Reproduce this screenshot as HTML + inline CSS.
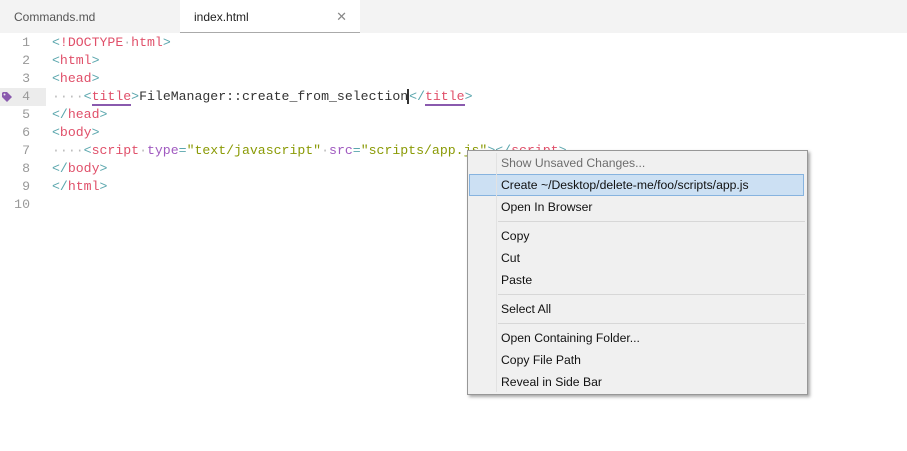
<!DOCTYPE html>
<html><head><style>
*{margin:0;padding:0;box-sizing:border-box}
body{width:907px;height:451px;background:#fff;position:relative;overflow:hidden;font-family:"Liberation Sans",sans-serif}
.tabs{position:absolute;left:0;top:0;width:907px;height:33px;background:#f3f3f3}
.tab{position:absolute;top:0;height:33px;font-size:12px;line-height:34px}
.t1{left:14px;color:#555}
.t2{left:180px;width:180px;background:#fff;border-bottom:1px solid #aaa;padding-left:14px;color:#222}
.x{position:absolute;right:13px;top:0;color:#888;font-size:13px}
.code{position:absolute;top:33px;left:0;width:907px;font-family:"Liberation Mono",monospace;font-size:13.2px}
.ln{height:18px;line-height:18px;position:relative;white-space:pre}
.ln .n{position:absolute;left:0;width:30px;text-align:right;color:#999}
.ln .c{position:absolute;left:52px}
.hl{background:#ececec;width:46px;height:18px;position:absolute;left:0;top:0}
.p{color:#5aa6ad}.t{color:#e0506a}.a{color:#a05ac0}.s{color:#8a9a05}.d{color:#bbb}.tx{color:#333}
.u{border-bottom:2px solid #8a5aae}
.menu{position:absolute;left:467px;top:150px;width:341px;height:245px;background:#f0f0f0;border:1px solid #979797;box-shadow:2px 2px 3px rgba(0,0,0,.35);font-size:12.2px;color:#111}
.menu .g{position:absolute;left:28px;top:2px;bottom:2px;border-left:1px solid #e2e2e2}
.it{position:absolute;left:33px;height:22px;line-height:22px}
.sep{position:absolute;left:30px;right:2px;height:1px;background:#d7d7d7}
.sel{position:absolute;left:1px;top:23px;width:335px;height:22px;background:#cce0f3;border:1px solid #86b3df}
</style></head><body>
<div class="tabs">
<div class="tab t1">Commands.md</div>
<div class="tab t2">index.html<span class="x">✕</span></div>
</div>
<div class="code">
<div class="ln" style="margin-top:1px"><span class="n">1</span><span class="c"><span class="p">&lt;</span><span class="t">!DOCTYPE</span><span class="d">·</span><span class="t">html</span><span class="p">&gt;</span></span></div>
<div class="ln"><span class="n">2</span><span class="c"><span class="p">&lt;</span><span class="t">html</span><span class="p">&gt;</span></span></div>
<div class="ln"><span class="n">3</span><span class="c"><span class="p">&lt;</span><span class="t">head</span><span class="p">&gt;</span></span></div>
<div class="ln"><span class="hl"></span><svg style="position:absolute;left:2px;top:4px" width="11" height="10" viewBox="0 0 11 10"><path d="M0 1 L0 5 L5 10 L10 5 L5 0 L1 0 Z" fill="#8a5aae"/><circle cx="2.5" cy="2.5" r="1" fill="#ececec"/></svg><span class="n">4</span><span class="c"><span class="d">····</span><span class="p">&lt;</span><span class="t u">title</span><span class="p">&gt;</span><span class="tx">FileManager::create_from_selection</span><span style="border-left:2px solid #333;margin-left:-1px"></span><span class="p">&lt;/</span><span class="t u">title</span><span class="p">&gt;</span></span></div>
<div class="ln"><span class="n">5</span><span class="c"><span class="p">&lt;/</span><span class="t">head</span><span class="p">&gt;</span></span></div>
<div class="ln"><span class="n">6</span><span class="c"><span class="p">&lt;</span><span class="t">body</span><span class="p">&gt;</span></span></div>
<div class="ln"><span class="n">7</span><span class="c"><span class="d">····</span><span class="p">&lt;</span><span class="t">script</span><span class="d">·</span><span class="a">type</span><span class="p">=</span><span class="s">"text/javascript"</span><span class="d">·</span><span class="a">src</span><span class="p">=</span><span class="s">"scripts/app.js"</span><span class="p">&gt;&lt;/</span><span class="t">script</span><span class="p">&gt;</span></span></div>
<div class="ln"><span class="n">8</span><span class="c"><span class="p">&lt;/</span><span class="t">body</span><span class="p">&gt;</span></span></div>
<div class="ln"><span class="n">9</span><span class="c"><span class="p">&lt;/</span><span class="t">html</span><span class="p">&gt;</span></span></div>
<div class="ln"><span class="n">10</span></div>
</div>
<div class="menu">
<div class="sel"></div>
<div class="g"></div>
<div class="it" style="top:1px;color:#6d6d6d">Show Unsaved Changes...</div>
<div class="it" style="top:23px">Create ~/Desktop/delete-me/foo/scripts/app.js</div>
<div class="it" style="top:45px">Open In Browser</div>
<div class="sep" style="top:70px"></div>
<div class="it" style="top:74px">Copy</div>
<div class="it" style="top:96px">Cut</div>
<div class="it" style="top:118px">Paste</div>
<div class="sep" style="top:143px"></div>
<div class="it" style="top:147px">Select All</div>
<div class="sep" style="top:172px"></div>
<div class="it" style="top:176px">Open Containing Folder...</div>
<div class="it" style="top:198px">Copy File Path</div>
<div class="it" style="top:220px">Reveal in Side Bar</div>
</div>
</body></html>
